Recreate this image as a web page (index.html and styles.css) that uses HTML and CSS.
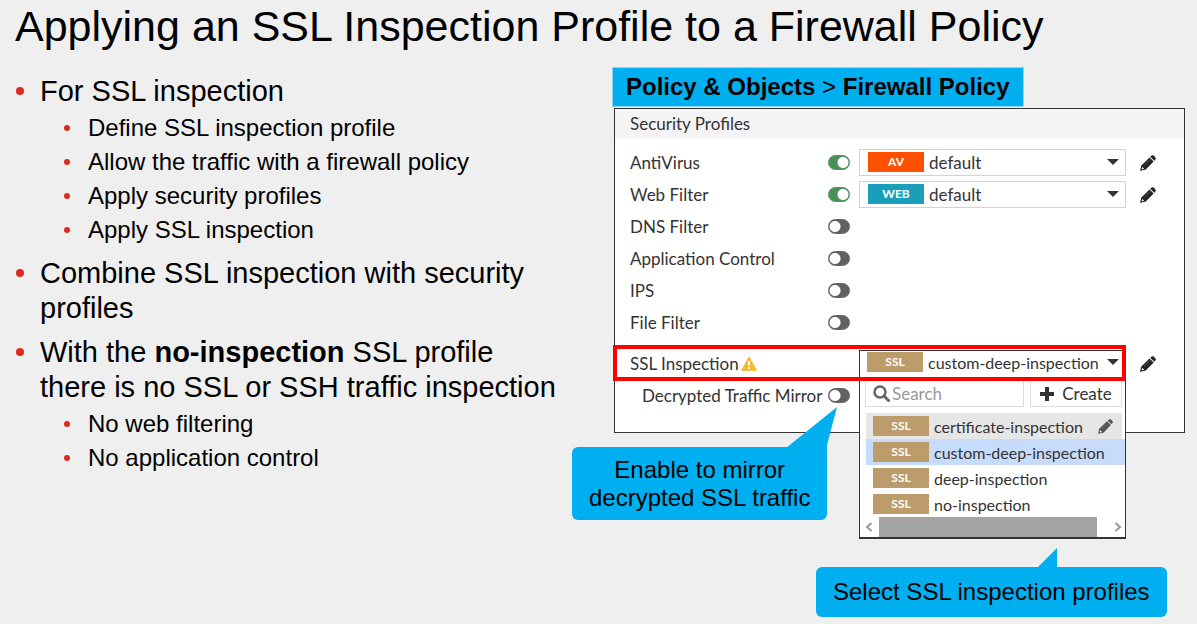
FILE: index.html
```html
<!DOCTYPE html>
<html lang="en">
<head>
<meta charset="utf-8">
<title>Applying an SSL Inspection Profile to a Firewall Policy</title>
<link rel="stylesheet" href="styles.css">
</head>
<body>
<svg class="defs" aria-hidden="true">
  <symbol id="pencil" viewBox="0 0 16 16">
    <path fill="currentColor" d="M10.200 1.800 11.700 .5Q12.800 -.2 13.800 .6L15.500 2.400Q16.300 3.300 15.500 4.300L14.300 5.700ZM9.500 2.400 13.700 6.400 5.800 14.600 .5 15.800Q0 15.800 .1 15.200L1.300 10.400Z"/>
    <path fill="none" stroke="#888" stroke-width=".5" d="M4.300 9.900 9.500 4.900"/>
    <path fill="#fff" d="M2.200 11.900 4.200 13.800 2.300 14.300 1.600 13.700Z"/>
  </symbol>
</svg>
<h1 class="title">Applying an SSL Inspection Profile to a Firewall Policy</h1>
<main class="slide">
  <ul class="points">
    <li>For SSL inspection
      <ul class="subpoints">
        <li>Define SSL inspection profile</li>
        <li>Allow the traffic with a firewall policy</li>
        <li>Apply security profiles</li>
        <li>Apply SSL inspection</li>
      </ul>
    </li>
    <li>Combine SSL inspection with security profiles</li>
    <li>With the <strong>no-inspection</strong> SSL profile there is no SSL or SSH traffic inspection
      <ul class="subpoints">
        <li>No web filtering</li>
        <li>No application control</li>
      </ul>
    </li>
  </ul>

  <section class="demo">
    <p class="crumb"><b>Policy &amp; Objects</b> &gt; <b>Firewall Policy</b></p>
    <div class="panel">
      <h2 class="panel-title">Security Profiles</h2>
      <div class="rows">
        <div class="row">
          <label for="av">AntiVirus</label>
          <input class="toggle" type="checkbox" id="av" checked>
          <div class="picker"><span class="tag tag-av">AV</span>
            <select class="select" aria-label="AntiVirus profile"><option>default</option></select>
            <span class="caret"></span></div>
          <button class="edit" aria-label="Edit AntiVirus profile"><svg><use href="#pencil"/></svg></button>
        </div>
        <div class="row">
          <label for="web">Web Filter</label>
          <input class="toggle" type="checkbox" id="web" checked>
          <div class="picker"><span class="tag tag-web">WEB</span>
            <select class="select" aria-label="Web Filter profile"><option>default</option></select>
            <span class="caret"></span></div>
          <button class="edit" aria-label="Edit Web Filter profile"><svg><use href="#pencil"/></svg></button>
        </div>
        <div class="row"><label for="dns">DNS Filter</label><input class="toggle" type="checkbox" id="dns"></div>
        <div class="row"><label for="app">Application Control</label><input class="toggle" type="checkbox" id="app"></div>
        <div class="row"><label for="ips">IPS</label><input class="toggle" type="checkbox" id="ips"></div>
        <div class="row"><label for="file">File Filter</label><input class="toggle" type="checkbox" id="file"></div>
        <div class="row row-ssl">
          <label class="ssl-label" for="ssl">SSL Inspection
            <svg class="warn" viewBox="0 0 16 15" aria-hidden="true"><path fill="#f6b92f" stroke="#f6b92f" stroke-linejoin="round" d="M8 1 15.300 14.300H.7Z"/><path stroke="#fff" stroke-width="2" d="M8 5v4.500M8 11v2"/></svg>
          </label>
          <span></span>
          <div class="combo">
            <div class="dropdown">
              <div class="current"><span class="tag">SSL</span>
                <select class="select" id="ssl"><option>custom-deep-inspection</option></select>
                <span class="caret"></span></div>
              <div class="tools">
                <div class="search">
                  <svg viewBox="0 0 17 17" aria-hidden="true"><circle cx="7" cy="7" r="5.500" fill="none" stroke="#666" stroke-width="2.500"/><path d="m11 11 4.500 4.500" stroke="#666" stroke-width="3" stroke-linecap="round"/></svg>
                  <input type="text" placeholder="Search" aria-label="Search">
                </div>
                <button class="create"><svg viewBox="0 0 14 14" aria-hidden="true"><path d="M7 0v14M0 7h14" stroke="#333" stroke-width="4"/></svg>Create</button>
              </div>
              <div class="options">
                <button class="option hovered"><span class="tag">SSL</span>certificate-inspection<svg><use href="#pencil"/></svg></button>
                <button class="option chosen"><span class="tag">SSL</span>custom-deep-inspection</button>
                <button class="option"><span class="tag">SSL</span>deep-inspection</button>
                <button class="option"><span class="tag">SSL</span>no-inspection</button>
              </div>
              <div class="scroll">
                <svg viewBox="0 0 8 10" aria-hidden="true"><path d="M6.500 1 2 5l4.500 4"/></svg>
                <span class="thumb"></span>
                <svg viewBox="0 0 8 10" aria-hidden="true"><path d="M1.500 1 6 5 1.500 9"/></svg>
              </div>
            </div>
          </div>
          <button class="edit" aria-label="Edit SSL profile"><svg><use href="#pencil"/></svg></button>
          <span class="highlight"></span>
        </div>
        <div class="row row-sub"><label for="mirror">Decrypted Traffic Mirror</label><input class="toggle" type="checkbox" id="mirror"></div>
      </div>
    </div>
    <p class="callout callout-mirror">Enable to mirror<br>decrypted SSL traffic
      <svg class="tail-mirror" viewBox="0 0 52 46" aria-hidden="true"><path fill="#00aff0" d="M0 41 51 0 41 38V46L37 41Z"/></svg></p>
    <p class="callout callout-select">Select SSL inspection profiles
      <svg class="tail-select" viewBox="0 0 20 20" aria-hidden="true"><path fill="#00aff0" d="M0 20 20 0V20Z"/></svg></p>
  </section>
</main>
</body>
</html>
```
FILE: styles.css
```css
* { box-sizing: border-box; }
body {
  margin: 0;
  min-height: 100vh;
  background: #efefef;
  color: #000;
  font-family: "Liberation Sans", Arial, sans-serif;
  font-size: 24px;
}
h1, h2, p, ul { margin: 0; padding: 0; font-weight: normal; }
button, input, select { font: inherit; color: inherit; margin: 0; }
button { border: 0; padding: 0; background: none; }
.defs { display: none; }

.title { padding: 1px 15px 16px; font-size: 43px; line-height: 50px; }

.slide { display: grid; grid-template-columns: minmax(0, 612fr) minmax(0, 573fr); padding-right: 12px; }

.points { padding: 7px 46px 0 40px; list-style: none; font-size: 29px; line-height: 35px; }
.points > li + li { margin-top: 9px; }
.points li::before {
  content: "";
  display: inline-block;
  width: 8px;
  height: 8px;
  margin: 0 16px 0 -24px;
  border-radius: 50%;
  background: #dd2a20;
  vertical-align: 6px;
}
.subpoints { margin-top: 2px; padding-left: 48px; list-style: none; font-size: 24px; line-height: 34px; }
.points .subpoints li::before { width: 6px; height: 6px; margin: 0 18px 0 -24px; vertical-align: 5px; }

.demo { position: relative; padding-bottom: 182px; }
.crumb {
  width: max-content;
  height: 40px;
  margin-bottom: 1px;
  padding: 0 13px;
  border: 1px solid #8fd4f0;
  background: #00aff0;
  line-height: 38px;
}

.panel {
  margin-left: 2px;
  border: 1px solid #333;
  background: #fff;
  color: #333;
  font-family: Lato, "Open Sans", sans-serif;
  font-size: 17px;
}
.panel-title { padding-left: 15px; background: #f4f4f4; font-size: 17px; line-height: 30px; }
.rows { padding: 7px 0 21px; }
.row {
  position: relative;
  display: grid;
  grid-template-columns: 198px 31px minmax(0, 1fr) 30px;
  align-items: center;
  height: 32px;
  padding: 0 28px 0 15px;
}
.row-ssl { margin-top: 9px; }
.row-sub label { padding-left: 12px; }
.ssl-label { display: flex; align-items: center; gap: 2px; }
.warn { width: 16px; height: 15px; }

.toggle {
  appearance: none;
  width: 22px;
  height: 15px;
  border: 1px solid #626262;
  border-radius: 8px;
  background: radial-gradient(circle at 6px 50%, #fff 5px, #626262 6px);
}
.toggle:checked { border-color: #4a9158; background: radial-gradient(circle at 14px 50%, #fff 5px, #4a9158 6px); }

.picker { display: flex; align-items: center; height: 27px; padding: 0 6px 0 8px; border: 1px solid #d3d3d3; }
.select { flex: 1; min-width: 0; appearance: none; padding: 0 0 0 5px; border: 0; background: none; }
.caret { border: 6px solid transparent; border-top: 6px solid #333; border-bottom: 0; }
.tag {
  flex: none;
  width: 56px;
  height: 20px;
  background: #bd9c6b;
  color: #fff;
  font-size: 12px;
  font-weight: bold;
  line-height: 20px;
  text-align: center;
}
.tag-av { background: #ff4f00; }
.tag-web { background: #1a9fba; }
.edit { justify-self: end; width: 16px; height: 16px; margin-top: 2px; color: #262626; }
.edit svg { display: block; width: 16px; height: 16px; }

.combo { position: relative; height: 26px; }
.dropdown {
  position: absolute;
  top: 0;
  left: 0;
  right: 0;
  border: 1px solid #333;
  border-bottom-width: 2px;
  background: #fff;
  font-size: 16px;
}
.current { display: flex; align-items: center; height: 22px; padding: 0 6px 0 7px; }
.tools { display: flex; gap: 6px; margin-top: 7px; padding: 0 3px 0 5px; font-size: 17px; }
.search, .create { display: flex; align-items: center; height: 27px; border: 1px solid #ddd; }
.search { flex: 1; min-width: 0; padding-left: 7px; }
.search svg { flex: none; width: 17px; height: 17px; }
.search input { width: 100%; min-width: 0; padding: 0 0 0 2px; border: 0; background: none; outline: 0; }
.search input::placeholder { color: #999; opacity: 1; }
.create { justify-content: center; gap: 8px; width: 92px; }
.create svg { width: 14px; height: 14px; }
.options { display: flex; flex-direction: column; margin-top: 6px; padding-left: 6px; }
.option { display: flex; align-items: center; gap: 5px; height: 26px; padding-left: 7px; }
.option svg { width: 15px; height: 15px; margin-left: 10px; color: #555; }
.hovered { margin-right: 3px; background: #e6e6e6; }
.chosen { background: #c7dbfd; }
.scroll { display: flex; align-items: center; gap: 6px; height: 20px; padding: 0 3px 0 5px; }
.scroll svg { width: 8px; height: 10px; fill: none; stroke: #999; stroke-width: 2; }
.thumb { flex: 1; height: 20px; margin-right: 11px; background: #a3a3a3; }

.highlight { position: absolute; top: -2px; right: 58px; bottom: -2px; left: -2px; border: 4px solid #f00; pointer-events: none; }

.callout { position: absolute; border-radius: 6px; background: #00aff0; line-height: 28px; text-align: center; white-space: nowrap; }
.callout svg { position: absolute; display: block; }
.callout-mirror { top: 380px; left: -40px; padding: 9px 17px 8px; }
.tail-mirror { top: -40px; right: -11px; width: 52px; height: 46px; }
.callout-select { top: 500px; left: 204px; padding: 11px 17px; }
.tail-select { top: -19px; right: 110px; width: 20px; height: 20px; }
```
